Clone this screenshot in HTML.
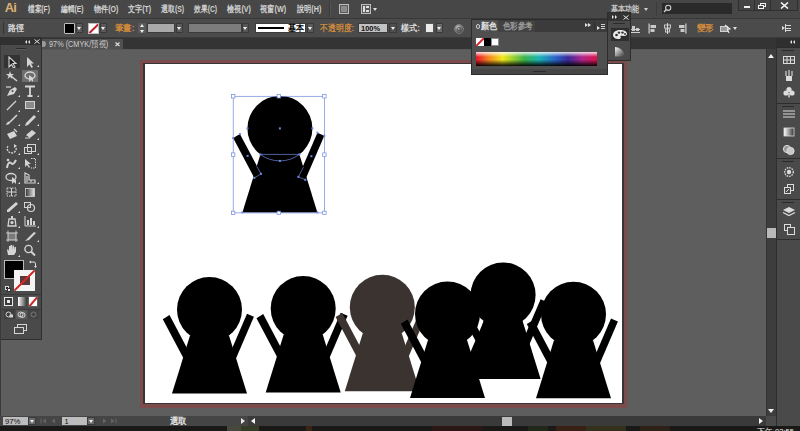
<!DOCTYPE html><html><head><meta charset="utf-8"><style>
*{margin:0;padding:0;box-sizing:border-box}
html,body{width:800px;height:431px;overflow:hidden;background:#4a4a4a;font-family:"Liberation Sans",sans-serif;}
.a{position:absolute}
.t{position:absolute;white-space:nowrap;font-size:10px;line-height:10px;color:#d6d6d6;font-weight:bold}
.dd{position:absolute;background:#6b6b6b;border:1px solid #3a3a3a}
.dd:after{content:"";position:absolute;left:50%;top:50%;margin-left:-2.5px;margin-top:-1px;border-left:2.5px solid transparent;border-right:2.5px solid transparent;border-top:3px solid #f0f0f0}
.or{color:#e0943a}
</style></head><body>
<div class="a" style="left:0px;top:0px;width:800px;height:18px;background:#474747;"></div>
<div class="a" style="left:0px;top:18px;width:800px;height:1px;background:#383838;"></div>
<div class="a" style="left:0px;top:19px;width:800px;height:18px;background:#4b4b4b;"></div>
<div class="a" style="left:0px;top:37px;width:800px;height:1px;background:#3a3a3a;"></div>
<div class="a" style="left:1px;top:38px;width:765px;height:378px;background:#5e5e5e;"></div>
<div class="a" style="left:41px;top:38px;width:735px;height:11px;background:#343434;"></div>
<div class="a" style="left:1px;top:49px;width:765px;height:1px;background:#585858;"></div>
<div class="a" style="left:0px;top:38.5px;width:123px;height:10.5px;background:#505050;"></div>
<div class="a" style="left:140px;top:60px;width:487px;height:348px;background:#7b4c4b;"></div>
<div class="a" style="left:143px;top:63px;width:481px;height:341px;background:#3a3436;"></div>
<div class="a" style="left:145px;top:64px;width:477px;height:339px;background:#ffffff;"></div>
<svg class="a" style="left:0;top:0" width="800" height="431" viewBox="0 0 800 431">
<defs>
<g id="fig">
<circle cx="0" cy="0" r="32.5"/>
<polygon points="-19.5,26 19.5,26 37.5,84 -37.5,84"/>
<polygon points="-46.7,9.7 -40,5.6 -18.9,45.4 -25.6,49.5"/>
<polygon points="44.4,7.3 37.5,4.3 18.5,48.4 25.4,51.4"/>
</g>
</defs>
<use href="#fig" x="209.5" y="309.5" fill="#000"/>
<use href="#fig" x="303.2" y="308.5" fill="#000"/>
<use href="#fig" x="382.3" y="307.3" fill="#3a3330"/>
<use href="#fig" x="447.5" y="314" fill="#000"/>
<use href="#fig" x="503.1" y="295" fill="#000"/>
<use href="#fig" x="573.5" y="314.3" fill="#000"/>
<use href="#fig" x="279.9" y="128.4" fill="#000"/>

<g fill="none" stroke="#7088dc" stroke-width="0.7"><rect x="233.2" y="96.3" width="91.2" height="116.6"/><path d="M260.4,154.4 L299.4,154.4"/><path d="M260.4,154.4 A32.5,32.5 0 0 0 299.4,154.4"/><path d="M256.7,166.3 L261.0,173.8 L254.3,177.9"/><path d="M303.5,167.0 L298.4,176.8 L305.3,179.8"/></g>
<g fill="#ffffff" stroke="#7088dc" stroke-width="0.7"><rect x="231.5" y="94.6" width="3.4" height="3.4"/><rect x="277.1" y="94.6" width="3.4" height="3.4"/><rect x="322.7" y="94.6" width="3.4" height="3.4"/><rect x="231.5" y="152.9" width="3.4" height="3.4"/><rect x="322.7" y="152.9" width="3.4" height="3.4"/><rect x="231.5" y="211.2" width="3.4" height="3.4"/><rect x="277.1" y="211.2" width="3.4" height="3.4"/><rect x="322.7" y="211.2" width="3.4" height="3.4"/></g>
<g fill="#7088dc"><rect x="278.9" y="127.4" width="2" height="2"/><rect x="246.4" y="127.4" width="2" height="2"/><rect x="311.4" y="127.4" width="2" height="2"/><rect x="278.9" y="159.9" width="2" height="2"/><rect x="259.4" y="153.4" width="2" height="2"/><rect x="298.4" y="153.4" width="2" height="2"/><rect x="232.2" y="137.1" width="2" height="2"/><rect x="238.9" y="133.0" width="2" height="2"/><rect x="260.0" y="172.8" width="2" height="2"/><rect x="253.3" y="176.9" width="2" height="2"/><rect x="323.3" y="134.7" width="2" height="2"/><rect x="316.4" y="131.7" width="2" height="2"/><rect x="297.4" y="175.8" width="2" height="2"/><rect x="304.3" y="178.8" width="2" height="2"/><rect x="246.6" y="154.9" width="2" height="2"/><rect x="310.4" y="155.2" width="2" height="2"/><rect x="241.4" y="211.4" width="2" height="2"/><rect x="316.4" y="211.4" width="2" height="2"/></g>
</svg>
<div class="t" style="left:4.8px;top:1.8px;font-size:12.8px;line-height:12.8px;font-weight:bold;color:#dcb273;letter-spacing:-0.8px">Ai</div>
<div class="t" id="t0" style="left:28.1px;top:4.5px;font-size:9px;line-height:9px;color:#d2d2d2;transform:scaleX(0.742);transform-origin:0 0;">檔案(F)</div>
<div class="t" id="t1" style="left:60.6px;top:4.5px;font-size:9px;line-height:9px;color:#d2d2d2;transform:scaleX(0.750);transform-origin:0 0;">編輯(E)</div>
<div class="t" id="t2" style="left:93.75px;top:4.5px;font-size:9px;line-height:9px;color:#d2d2d2;transform:scaleX(0.785);transform-origin:0 0;">物件(O)</div>
<div class="t" id="t3" style="left:128.1px;top:4.5px;font-size:9px;line-height:9px;color:#d2d2d2;transform:scaleX(0.785);transform-origin:0 0;">文字(T)</div>
<div class="t" id="t4" style="left:160.6px;top:4.5px;font-size:9px;line-height:9px;color:#d2d2d2;transform:scaleX(0.772);transform-origin:0 0;">選取(S)</div>
<div class="t" id="t5" style="left:193.75px;top:4.5px;font-size:9px;line-height:9px;color:#d2d2d2;transform:scaleX(0.759);transform-origin:0 0;">效果(C)</div>
<div class="t" id="t6" style="left:226.75px;top:4.5px;font-size:9px;line-height:9px;color:#d2d2d2;transform:scaleX(0.800);transform-origin:0 0;">檢視(V)</div>
<div class="t" id="t7" style="left:259.75px;top:4.5px;font-size:9px;line-height:9px;color:#d2d2d2;transform:scaleX(0.808);transform-origin:0 0;">視窗(W)</div>
<div class="t" id="t8" style="left:296.5px;top:4.5px;font-size:9px;line-height:9px;color:#d2d2d2;transform:scaleX(0.797);transform-origin:0 0;">說明(H)</div>
<div class="a" style="left:329px;top:2px;width:1px;height:15px;background:#3a3a3a;"></div>
<div class="a" style="left:330px;top:2px;width:1px;height:15px;background:#555555;"></div>
<div class="a" style="left:339px;top:4px;width:10px;height:10px;border:1px solid #bdbdbd;background:#5a5a5a"></div>
<div class="a" style="left:341px;top:6px;width:6px;height:6px;background:#8a8a8a"></div>
<div class="a" style="left:361px;top:4px;width:10px;height:10px;border:1px solid #bdbdbd;background:#5a5a5a"></div>
<div class="a" style="left:363px;top:6px;width:2px;height:6px;background:#e0e0e0"></div>
<div class="a" style="left:366px;top:6px;width:3px;height:2px;background:#e0e0e0"></div>
<div class="a" style="left:366px;top:10px;width:3px;height:2px;background:#e0e0e0"></div>
<div class="a" style="left:373px;top:8px;border-left:2.5px solid transparent;border-right:2.5px solid transparent;border-top:3px solid #e0e0e0"></div>
<div class="t" id="t9" style="left:610.6px;top:4.5px;font-size:9px;line-height:9px;color:#c8c8c8;transform:scaleX(0.778);transform-origin:0 0;">基本功能</div>
<div class="a" style="left:644px;top:8px;border-left:2.5px solid transparent;border-right:2.5px solid transparent;border-top:3px solid #d0d0d0"></div>
<div class="a" style="left:656px;top:2px;width:1px;height:14px;background:#3c3c3c;"></div>
<div class="a" style="left:662px;top:3px;width:70px;height:11px;background:#2a2a2a;"></div>
<svg class="a" style="left:663px;top:4px" width="9" height="9" viewBox="0 0 9 9"><circle cx="5.2" cy="3.8" r="2.6" fill="none" stroke="#cfcfcf" stroke-width="1.1"/><path d="M3.4,5.6 L1,8" stroke="#cfcfcf" stroke-width="1.4"/></svg>
<div class="a" style="left:738px;top:0px;width:60px;height:11px;background:#2f2f2f;"></div>
<div class="a" style="left:739px;top:0px;width:15px;height:10px;background:#444444;"></div>
<div class="a" style="left:755px;top:0px;width:15px;height:10px;background:#444444;"></div>
<div class="a" style="left:771px;top:0px;width:26px;height:10px;background:#444444;"></div>
<div class="a" style="left:744px;top:6px;width:6px;height:2px;background:#f0f0f0;"></div>
<div class="a" style="left:760px;top:3px;width:6px;height:4px;border:1px solid #f0f0f0"></div>
<div class="a" style="left:758px;top:5px;width:6px;height:4px;border:1px solid #f0f0f0;background:#444"></div>
<svg class="a" style="left:780px;top:2px" width="9" height="7" viewBox="0 0 9 7"><path d="M1,0.5 L8,6.5 M8,0.5 L1,6.5" stroke="#f4f4f4" stroke-width="1.6"/></svg>
<div class="a" style="left:3px;top:22px;width:1px;height:12px;background:#333333;"></div>
<div class="t" id="t10" style="left:8px;top:23.5px;font-size:9px;line-height:9px;color:#d8d8d8;transform:scaleX(0.889);transform-origin:0 0;">路徑</div>
<div class="a" style="left:64px;top:23px;width:11px;height:11px;border:1px solid #bdbdbd;border-radius:1px;background:#000"></div>
<div class="dd" style="left:76px;top:23px;width:7px;height:10px;background:#5a5a5a"></div>
<div class="a" style="left:88px;top:23px;width:11px;height:11px;border:1px solid #bdbdbd;background:#fff;overflow:hidden"><div style="position:absolute;left:-2px;top:3.5px;width:13px;height:2px;background:#c0202a;transform:rotate(-45deg)"></div></div>
<div class="dd" style="left:100px;top:23px;width:7px;height:10px;background:#5a5a5a"></div>
<div class="t" id="t11" style="left:115px;top:24px;font-size:9px;line-height:9px;color:#d08a3c;transform:scaleX(0.924);transform-origin:0 0;">筆畫:</div>
<div class="a" style="left:138px;top:23px;width:8px;height:10px;background:#5a5a5a"></div>
<div class="a" style="left:140px;top:24px;border-left:2.5px solid transparent;border-right:2.5px solid transparent;border-bottom:3px solid #eee"></div>
<div class="a" style="left:140px;top:30px;border-left:2.5px solid transparent;border-right:2.5px solid transparent;border-top:3px solid #eee"></div>
<div class="a" style="left:147px;top:23px;width:28px;height:10px;background:#a9a9a9;border:1px solid #3c3c3c"></div>
<div class="dd" style="left:176px;top:23px;width:7px;height:10px;background:#5a5a5a"></div>
<div class="a" style="left:188px;top:23px;width:54px;height:10px;background:#7c7c7c;border:1px solid #3c3c3c"></div>
<div class="dd" style="left:242px;top:23px;width:7px;height:10px;background:#555555"></div>
<div class="a" style="left:255px;top:23px;width:51px;height:10px;background:#ffffff;border:1px solid #3c3c3c"></div>
<div class="a" style="left:258px;top:27px;width:26px;height:2px;background:#000000;"></div>
<div class="t" id="t12" style="left:288px;top:23.5px;font-size:9px;line-height:9px;color:#000000;transform:scaleX(0.889);transform-origin:0 0;">基本</div>
<div class="dd" style="left:307px;top:23px;width:7px;height:10px;background:#5a5a5a"></div>
<div class="t" id="t13" style="left:320px;top:24px;font-size:9px;line-height:9px;color:#d08a3c;transform:scaleX(0.872);transform-origin:0 0;">不透明度:</div>
<div class="a" style="left:358px;top:23px;width:30px;height:10px;background:#c2c2c2;border:1px solid #3c3c3c"></div>
<div class="t" id="t14" style="left:360.5px;top:24.5px;font-size:8px;line-height:8px;color:#111111;transform:scaleX(0.928);transform-origin:0 0;">100%</div>
<div class="dd" style="left:389px;top:23px;width:8px;height:10px;background:#4e4e4e"></div>
<div class="t" id="t15" style="left:401px;top:23.5px;font-size:9px;line-height:9px;color:#d8d8d8;transform:scaleX(0.905);transform-origin:0 0;">樣式:</div>
<div class="a" style="left:425px;top:23px;width:9px;height:10px;background:#ebebeb;border:1px solid #555"></div>
<div class="dd" style="left:436px;top:23px;width:7px;height:10px;background:#6b6b6b"></div>
<svg class="a" style="left:454px;top:23.5px" width="10" height="10" viewBox="0 0 10 10"><defs><radialGradient id="gg" cx="0.4" cy="0.35" r="0.7"><stop offset="0" stop-color="#d8d8d8"/><stop offset="0.5" stop-color="#7a7a7a"/><stop offset="1" stop-color="#3a3a3a"/></radialGradient></defs><circle cx="5" cy="5" r="4.5" fill="url(#gg)" stroke="#9a9a9a" stroke-width="0.6"/><circle cx="5" cy="5.3" r="2.2" fill="#5a5a5a"/><circle cx="4.6" cy="4.8" r="0.9" fill="#bbb"/></svg>
<svg class="a" style="left:631px;top:23px" width="9" height="11" viewBox="0 0 9 11"><rect x="0" y="9" width="9" height="1" fill="#d0d0d0"/><rect x="1" y="3" width="3" height="5" fill="#c8c8c8"/><rect x="5" y="5" width="3" height="3" fill="#c8c8c8"/><rect x="0" y="6" width="9" height="1" fill="#d0d0d0"/></svg>
<svg class="a" style="left:647.5px;top:23px" width="9" height="11" viewBox="0 0 9 11"><rect x="0.5" y="0.5" width="1.2" height="10" fill="#d0d0d0"/><rect x="2.5" y="2" width="5.5" height="3" fill="#c8c8c8"/><rect x="2.5" y="6" width="4" height="3" fill="#c8c8c8"/></svg>
<svg class="a" style="left:662.5px;top:23px" width="9" height="11" viewBox="0 0 9 11"><rect x="1.5" y="2" width="6" height="3" fill="none" stroke="#c8c8c8" stroke-width="1"/><rect x="2.5" y="6" width="4" height="3" fill="none" stroke="#c8c8c8" stroke-width="1"/><rect x="4" y="0" width="1" height="11" fill="#d8d8d8"/></svg>
<svg class="a" style="left:678px;top:23px" width="9" height="11" viewBox="0 0 9 11"><rect x="7.3" y="0.5" width="1.2" height="10" fill="#d0d0d0"/><rect x="1" y="2" width="5.5" height="3" fill="#c8c8c8"/><rect x="2.5" y="6" width="4" height="3" fill="#c8c8c8"/></svg>
<div class="t" id="t16" style="left:697px;top:24px;font-size:9px;line-height:9px;color:#d08a3c;transform:scaleX(0.944);transform-origin:0 0;">變形</div>
<svg class="a" style="left:719.5px;top:23.5px" width="11" height="10" viewBox="0 0 11 10"><rect x="0.5" y="2.5" width="7" height="5" fill="#9a9a9a" stroke="#d0d0d0" stroke-width="1"/><path d="M5,1 L10,5 L7.5,5.5 L9,9" stroke="#e8e8e8" stroke-width="1.1" fill="none"/></svg>
<div class="a" style="left:733px;top:27px;border-left:2.5px solid transparent;border-right:2.5px solid transparent;border-top:3px solid #e0e0e0"></div>
<div class="a" style="left:782px;top:26px;border-top:2px solid transparent;border-bottom:2px solid transparent;border-left:3px solid #e0e0e0"></div>
<div class="a" style="left:786px;top:25.0px;width:5px;height:1px;background:#d8d8d8;"></div>
<div class="a" style="left:786px;top:27.5px;width:5px;height:1px;background:#d8d8d8;"></div>
<div class="a" style="left:786px;top:30.0px;width:5px;height:1px;background:#d8d8d8;"></div>
<div class="a" style="left:785px;top:24px;width:1px;height:8px;background:#d8d8d8;"></div>
<div class="t" id="t17" style="left:48.7px;top:39.5px;font-size:9px;line-height:9px;color:#cccccc;transform:scaleX(0.812);transform-origin:0 0;font-weight:normal;">97% (CMYK/預視)</div>
<svg class="a" style="left:114.5px;top:42px" width="5" height="4.5" viewBox="0 0 5 4.5"><path d="M0.5,0.5 L4.5,4 M4.5,0.5 L0.5,4" stroke="#e0e0e0" stroke-width="1.1"/></svg>
<svg class="a" style="left:41px;top:40px" width="6" height="8" viewBox="0 0 6 8"><circle cx="2" cy="4" r="3" fill="#9a9a9a"/></svg>
<div class="a" style="left:471px;top:19px;width:137px;height:56px;background:#2c2c2c;"></div>
<div class="a" style="left:472px;top:20px;width:135px;height:54px;background:#4f4f4f;"></div>
<div class="a" style="left:472px;top:20px;width:135px;height:12px;background:#3b3b3b;"></div>
<div class="a" style="left:472px;top:20px;width:26px;height:12px;background:#4f4f4f;"></div>
<div class="a" style="left:498px;top:21px;width:37px;height:11px;background:#424242;"></div>
<div class="a" style="left:476px;top:24px;width:4px;height:5px;border:1px solid #cfcfcf;border-radius:2px"></div>
<div class="t" id="t18" style="left:481px;top:22px;font-size:9px;line-height:9px;color:#e0e0e0;transform:scaleX(0.889);transform-origin:0 0;">顏色</div>
<div class="t" id="t19" style="left:503px;top:22px;font-size:9px;line-height:9px;color:#9a9a9a;transform:scaleX(0.833);transform-origin:0 0;">色彩參考</div>
<div class="a" style="left:585px;top:23px;border-top:2.5px solid transparent;border-bottom:2.5px solid transparent;border-left:3px solid #e0e0e0"></div>
<div class="a" style="left:588px;top:23px;border-top:2.5px solid transparent;border-bottom:2.5px solid transparent;border-left:3px solid #e0e0e0"></div>
<div class="a" style="left:594px;top:22px;width:1px;height:8px;background:#2e2e2e;"></div>
<div class="a" style="left:597px;top:26px;border-top:2px solid transparent;border-bottom:2px solid transparent;border-left:3px solid #e0e0e0"></div>
<div class="a" style="left:601px;top:24px;width:4px;height:1px;background:#cfcfcf;"></div>
<div class="a" style="left:601px;top:26px;width:4px;height:1px;background:#cfcfcf;"></div>
<div class="a" style="left:601px;top:28px;width:4px;height:1px;background:#cfcfcf;"></div>
<div class="a" style="left:476px;top:38px;width:8px;height:8px;background:#fff;overflow:hidden"><div style="position:absolute;left:-2px;top:3px;width:12px;height:1.5px;background:#d2262b;transform:rotate(-45deg)"></div></div>
<div class="a" style="left:484px;top:38px;width:7px;height:8px;background:#000000;"></div>
<div class="a" style="left:491px;top:38px;width:8px;height:8px;background:#ffffff;border:1px solid #888"></div>
<div class="a" style="left:476px;top:52px;width:121px;height:14px;background:linear-gradient(to bottom,rgba(255,255,255,0.85) 0%,rgba(255,255,255,0) 35%,rgba(0,0,0,0) 55%,rgba(0,0,0,0.95) 100%),linear-gradient(to right,#e8102a 0%,#f58220 10%,#f4e81a 22%,#3cb44a 40%,#1ab4b4 52%,#2a62c8 66%,#3a2a9a 76%,#b0268a 88%,#e0104a 100%)"></div>
<div class="a" style="left:472px;top:69px;width:135px;height:5px;background:#454545;"></div>
<div class="a" style="left:533px;top:71px;width:13px;height:1px;background:#2a2a2a;"></div>
<div class="a" style="left:607px;top:12px;width:24px;height:49px;background:#2c2c2c;"></div>
<div class="a" style="left:608px;top:13px;width:22px;height:47px;background:#4a4a4a;"></div>
<div class="a" style="left:608px;top:13px;width:22px;height:8px;background:#333333;"></div>
<div class="a" style="left:612px;top:15px;border-top:2px solid transparent;border-bottom:2px solid transparent;border-left:2.5px solid #e8e8e8"></div>
<div class="a" style="left:615px;top:15px;border-top:2px solid transparent;border-bottom:2px solid transparent;border-left:2.5px solid #e8e8e8"></div>
<svg class="a" style="left:623px;top:14.5px" width="6" height="5" viewBox="0 0 6 5"><path d="M0.5,0.5 L5.5,4.5 M5.5,0.5 L0.5,4.5" stroke="#e8e8e8" stroke-width="1"/></svg>
<div class="a" style="left:613px;top:23px;width:12px;height:1px;background:#2a2a2a;"></div>
<div class="a" style="left:611px;top:28px;width:18px;height:13px;background:#2e2e2e;"></div>
<svg class="a" style="left:612px;top:29px" width="16" height="11" viewBox="0 0 16 11"><path d="M8,1 C3.5,1 1,3.5 1,6 C1,8.5 3.5,10 7,10 C9,10 9,8.5 8.5,7.8 C8,7 9,6.3 10.5,6.8 C13.5,7.5 15,6.5 15,4.8 C15,2.5 12,1 8,1 Z" fill="#e8e8e8"/><circle cx="4.5" cy="6" r="1.3" fill="#2e2e2e"/><circle cx="7" cy="3.6" r="1.2" fill="#2e2e2e"/><circle cx="10.5" cy="3.6" r="1.2" fill="#2e2e2e"/><circle cx="13" cy="5" r="0.9" fill="#2e2e2e"/></svg>
<svg class="a" style="left:614px;top:46px" width="11" height="11" viewBox="0 0 11 11"><defs><linearGradient id="gq" x1="0" y1="0" x2="1" y2="1"><stop offset="0" stop-color="#fafafa"/><stop offset="1" stop-color="#3a3a3a"/></linearGradient></defs><path d="M1,1 A9.5,9.5 0 0 1 10.5,10.5 L1,10.5 Z" fill="url(#gq)"/></svg>
<div class="a" style="left:0px;top:37px;width:42px;height:303px;background:#2f2f2f;"></div>
<div class="a" style="left:0px;top:45px;width:41px;height:294px;background:#4a4a4a;"></div>
<div class="a" style="left:0px;top:38px;width:1px;height:378px;background:#3a3a3a;"></div>
<div class="a" style="left:0px;top:37px;width:41px;height:8px;background:#303030;"></div>
<div class="a" style="left:25px;top:39.5px;border-top:2px solid transparent;border-bottom:2px solid transparent;border-right:2.5px solid #e0e0e0"></div>
<div class="a" style="left:27.5px;top:39.5px;border-top:2px solid transparent;border-bottom:2px solid transparent;border-right:2.5px solid #e0e0e0"></div>
<svg class="a" style="left:34px;top:39px" width="6" height="5" viewBox="0 0 6 5"><path d="M0.5,0.5 L5.5,4.5 M5.5,0.5 L0.5,4.5" stroke="#e0e0e0" stroke-width="1"/></svg>
<div class="a" style="left:16px;top:48px;width:10px;height:1px;background:#2a2a2a;"></div>
<div class="a" style="left:16px;top:49px;width:10px;height:1px;background:#5a5a5a;"></div>
<div class="a" style="left:4px;top:55px;width:16px;height:13px;background:#333333;"></div>
<div class="a" style="left:22px;top:70px;width:16px;height:12px;background:#6e6e6e;"></div>
<svg class="a" style="left:5.0px;top:55.5px" width="14" height="12" viewBox="0 0 14 12"><path d="M4,1 L4,11 L6.5,8.5 L8.5,12 L10,11 L8,7.5 L11,7.5 Z" fill="#1e1e1e" stroke="#d4d4d4" stroke-width="1.1"/></svg>
<svg class="a" style="left:23.0px;top:55.5px" width="14" height="12" viewBox="0 0 14 12"><path d="M4,1 L4,11 L6.5,8.5 L8.5,12 L10,11 L8,7.5 L11,7.5 Z" fill="#d4d4d4"/></svg>
<div class="a" style="left:37px;top:65px;border-left:2px solid transparent;border-bottom:2px solid #e0e0e0"></div>
<svg class="a" style="left:5.0px;top:70.0px" width="14" height="12" viewBox="0 0 14 12"><path d="M6,6 L12,11" stroke="#d4d4d4" stroke-width="1.6"/><path d="M5,1 L6,4 L9,4 L6.5,6 L7.5,9 L5,7 L2.5,9 L3.5,6 L1,4 L4,4 Z" fill="#d4d4d4"/></svg>
<svg class="a" style="left:23.0px;top:70.0px" width="14" height="12" viewBox="0 0 14 12"><ellipse cx="7" cy="5.5" rx="5" ry="3.5" fill="none" stroke="#d4d4d4" stroke-width="1.4"/><path d="M6,5 L6,12 L8,10 L10,12 L10,8 Z" fill="#d4d4d4"/></svg>
<svg class="a" style="left:5.0px;top:84.5px" width="14" height="12" viewBox="0 0 14 12"><path d="M2,11 L5,5 L10,2 L12,4 L9,9 Z" fill="#d4d4d4"/><path d="M1,2 L6,2" stroke="#d4d4d4" stroke-width="1.2"/><circle cx="7.5" cy="6" r="1" fill="#4a4a4a"/></svg>
<div class="a" style="left:18px;top:95px;border-left:2px solid transparent;border-bottom:2px solid #e0e0e0"></div>
<svg class="a" style="left:23.0px;top:84.5px" width="14" height="12" viewBox="0 0 14 12"><path d="M2,1.5 L12,1.5 M7,1.5 L7,11 M4.5,11 L9.5,11" stroke="#d4d4d4" stroke-width="1.8"/></svg>
<div class="a" style="left:37px;top:95px;border-left:2px solid transparent;border-bottom:2px solid #e0e0e0"></div>
<svg class="a" style="left:5.0px;top:99.0px" width="14" height="12" viewBox="0 0 14 12"><path d="M2,11 L11,2" stroke="#d4d4d4" stroke-width="1.3"/></svg>
<div class="a" style="left:18px;top:110px;border-left:2px solid transparent;border-bottom:2px solid #e0e0e0"></div>
<svg class="a" style="left:23.0px;top:99.0px" width="14" height="12" viewBox="0 0 14 12"><rect x="2.5" y="2.5" width="9" height="7" fill="#8a8a8a" stroke="#d4d4d4" stroke-width="1"/></svg>
<div class="a" style="left:37px;top:110px;border-left:2px solid transparent;border-bottom:2px solid #e0e0e0"></div>
<svg class="a" style="left:5.0px;top:113.5px" width="14" height="12" viewBox="0 0 14 12"><path d="M12,1 L5,8" stroke="#d4d4d4" stroke-width="1.6"/><path d="M1,11 Q2,7 5,7.5 Q6,10 1,11 Z" fill="#d4d4d4"/></svg>
<div class="a" style="left:18px;top:124px;border-left:2px solid transparent;border-bottom:2px solid #e0e0e0"></div>
<svg class="a" style="left:23.0px;top:113.5px" width="14" height="12" viewBox="0 0 14 12"><path d="M11,1 L13,3 L5,11 L2,12 L3,9 Z" fill="#d4d4d4"/></svg>
<div class="a" style="left:37px;top:124px;border-left:2px solid transparent;border-bottom:2px solid #e0e0e0"></div>
<svg class="a" style="left:5.0px;top:128.0px" width="14" height="12" viewBox="0 0 14 12"><path d="M2,6 L9,3 L12,8 L5,11 Z" fill="#d4d4d4"/><path d="M9,1 L12,4" stroke="#d4d4d4" stroke-width="1.3"/></svg>
<svg class="a" style="left:23.0px;top:128.0px" width="14" height="12" viewBox="0 0 14 12"><path d="M3,7 L9,2 L13,5 L7,10 Z" fill="#d4d4d4"/><path d="M2,10 L7,10" stroke="#d4d4d4" stroke-width="1"/></svg>
<div class="a" style="left:37px;top:138px;border-left:2px solid transparent;border-bottom:2px solid #e0e0e0"></div>
<svg class="a" style="left:5.0px;top:142.5px" width="14" height="12" viewBox="0 0 14 12"><path d="M3,3 A4.5,4.5 0 1 0 11,4" fill="none" stroke="#d4d4d4" stroke-width="1.3" stroke-dasharray="2,1"/><path d="M9,1 L12,3 L9,5 Z" fill="#d4d4d4"/></svg>
<div class="a" style="left:18px;top:153px;border-left:2px solid transparent;border-bottom:2px solid #e0e0e0"></div>
<svg class="a" style="left:23.0px;top:142.5px" width="14" height="12" viewBox="0 0 14 12"><rect x="1.5" y="4.5" width="7" height="6" fill="none" stroke="#d4d4d4" stroke-width="1"/><rect x="4.5" y="1.5" width="8" height="7" fill="none" stroke="#d4d4d4" stroke-width="1"/></svg>
<div class="a" style="left:37px;top:153px;border-left:2px solid transparent;border-bottom:2px solid #e0e0e0"></div>
<svg class="a" style="left:5.0px;top:157.0px" width="14" height="12" viewBox="0 0 14 12"><path d="M2,11 Q3,4 6,6 Q8,9 11,3" fill="none" stroke="#d4d4d4" stroke-width="2"/><circle cx="3" cy="3" r="1.3" fill="#d4d4d4"/></svg>
<div class="a" style="left:18px;top:167px;border-left:2px solid transparent;border-bottom:2px solid #e0e0e0"></div>
<svg class="a" style="left:23.0px;top:157.0px" width="14" height="12" viewBox="0 0 14 12"><path d="M2,2 L2,10 L4,8 L6,11 L7,10 L5,7 L8,7 Z" fill="#d4d4d4"/><path d="M8,1.5 L12.5,1.5 L12.5,11 L8,11" fill="none" stroke="#d4d4d4" stroke-width="1" stroke-dasharray="1.5,1"/></svg>
<svg class="a" style="left:5.0px;top:171.5px" width="14" height="12" viewBox="0 0 14 12"><ellipse cx="6" cy="5" rx="5" ry="3.5" fill="none" stroke="#d4d4d4" stroke-width="1.3"/><path d="M7,5 L7,12 L9,10 L11,12 L11,8 Z" fill="#d4d4d4"/></svg>
<div class="a" style="left:18px;top:182px;border-left:2px solid transparent;border-bottom:2px solid #e0e0e0"></div>
<svg class="a" style="left:23.0px;top:171.5px" width="14" height="12" viewBox="0 0 14 12"><path d="M2,1 L2,11 L12,11 L12,8 L6,8 L6,3 Z" fill="none" stroke="#d4d4d4" stroke-width="1.2"/><path d="M4,4 L4,10 M8,8 L8,10" stroke="#d4d4d4" stroke-width="1.2"/></svg>
<div class="a" style="left:37px;top:182px;border-left:2px solid transparent;border-bottom:2px solid #e0e0e0"></div>
<svg class="a" style="left:5.0px;top:186.0px" width="14" height="12" viewBox="0 0 14 12"><rect x="2" y="2" width="9" height="8" fill="none" stroke="#d4d4d4" stroke-width="1" stroke-dasharray="1.5,1"/><path d="M2,6 L11,6 M6.5,2 L6.5,10" stroke="#d4d4d4" stroke-width="1"/></svg>
<svg class="a" style="left:23.0px;top:186.0px" width="14" height="12" viewBox="0 0 14 12"><defs><linearGradient id="gt" x1="0" x2="1"><stop offset="0" stop-color="#333"/><stop offset="1" stop-color="#e8e8e8"/></linearGradient></defs><rect x="2.5" y="2.5" width="9" height="8" fill="url(#gt)" stroke="#d4d4d4" stroke-width="0.8"/></svg>
<svg class="a" style="left:5.0px;top:200.5px" width="14" height="12" viewBox="0 0 14 12"><path d="M11,1 L13,3 L4,11 L2,11 L2,9 Z" fill="#d4d4d4"/></svg>
<div class="a" style="left:18px;top:211px;border-left:2px solid transparent;border-bottom:2px solid #e0e0e0"></div>
<svg class="a" style="left:23.0px;top:200.5px" width="14" height="12" viewBox="0 0 14 12"><rect x="1.5" y="1.5" width="6" height="5" fill="none" stroke="#d4d4d4" stroke-width="1"/><circle cx="8" cy="7" r="3.5" fill="none" stroke="#d4d4d4" stroke-width="1.2"/></svg>
<svg class="a" style="left:5.0px;top:215.0px" width="14" height="12" viewBox="0 0 14 12"><path d="M4,4 L10,4 L11,11 L3,11 Z" fill="none" stroke="#d4d4d4" stroke-width="1.3"/><circle cx="7" cy="7.5" r="1.6" fill="#d4d4d4"/><path d="M6,1 L8,1 L8,4 L6,4 Z" fill="#d4d4d4"/></svg>
<div class="a" style="left:18px;top:226px;border-left:2px solid transparent;border-bottom:2px solid #e0e0e0"></div>
<svg class="a" style="left:23.0px;top:215.0px" width="14" height="12" viewBox="0 0 14 12"><path d="M2,1 L2,11 L13,11" fill="none" stroke="#d4d4d4" stroke-width="1"/><rect x="4" y="5" width="2" height="5" fill="#d4d4d4"/><rect x="7" y="3" width="2" height="7" fill="#d4d4d4"/><rect x="10" y="6" width="2" height="4" fill="#d4d4d4"/></svg>
<div class="a" style="left:37px;top:226px;border-left:2px solid transparent;border-bottom:2px solid #e0e0e0"></div>
<svg class="a" style="left:5.0px;top:229.5px" width="14" height="12" viewBox="0 0 14 12"><rect x="3" y="3" width="8" height="7" fill="#7a7a7a" stroke="#d4d4d4" stroke-width="1"/><path d="M1,3 L3,3 M11,3 L13,3 M1,10 L3,10 M11,10 L13,10 M3,0.5 L3,3 M11,0.5 L11,3 M3,10 L3,12 M11,10 L11,12" stroke="#d4d4d4" stroke-width="0.8"/></svg>
<svg class="a" style="left:23.0px;top:229.5px" width="14" height="12" viewBox="0 0 14 12"><path d="M2,11 L11,2 L13,3 L6,10 Z" fill="#d4d4d4"/></svg>
<div class="a" style="left:37px;top:240px;border-left:2px solid transparent;border-bottom:2px solid #e0e0e0"></div>
<svg class="a" style="left:5.0px;top:244.0px" width="14" height="12" viewBox="0 0 14 12"><path d="M3,11 L2,6 L3,5 L4,7 L4,2 L5.5,2 L5.5,6 L5.5,1 L7,1 L7,6 L7.5,1.5 L9,1.5 L9,6 L9.5,3 L11,3 L11,8 L9,11 Z" fill="#d4d4d4"/></svg>
<div class="a" style="left:18px;top:255px;border-left:2px solid transparent;border-bottom:2px solid #e0e0e0"></div>
<svg class="a" style="left:23.0px;top:244.0px" width="14" height="12" viewBox="0 0 14 12"><circle cx="5.5" cy="5" r="3.6" fill="none" stroke="#d4d4d4" stroke-width="1.4"/><path d="M8,7.5 L12,11.5" stroke="#d4d4d4" stroke-width="2"/></svg>
<div class="a" style="left:14px;top:270px;width:21px;height:21px;background:#f4f4f4;"></div>
<div class="a" style="left:19.5px;top:275.5px;width:10px;height:9px;background:#5e3838;"></div>
<svg class="a" style="left:14px;top:270px" width="21" height="21" viewBox="0 0 21 21"><path d="M0.5,20.5 L20.5,0.5" stroke="#d42a2a" stroke-width="1.6"/></svg>
<div class="a" style="left:4px;top:260px;width:20px;height:19px;background:#b8b8b8;"></div>
<div class="a" style="left:5px;top:261px;width:18px;height:17px;background:#000000;"></div>
<div class="a" style="left:14px;top:270px;width:10px;height:9px;background:#f4f4f4;"></div>
<div class="a" style="left:19.5px;top:275.5px;width:4.5px;height:3.5px;background:#5e3838;"></div>
<svg class="a" style="left:14px;top:270px" width="21" height="21" viewBox="0 0 21 21"><path d="M0.5,20.5 L20.5,0.5" stroke="#d42a2a" stroke-width="1.6"/></svg>
<svg class="a" style="left:29px;top:260px" width="8" height="8" viewBox="0 0 8 8"><path d="M1,2 L5,2 Q6.5,2 6.5,4 L6.5,6.5" fill="none" stroke="#e0e0e0" stroke-width="1"/><path d="M0,2 L2,0.5 L2,3.5 Z M6.5,8 L5,6 L8,6 Z" fill="#e0e0e0"/></svg>
<div class="a" style="left:5px;top:286px;width:4px;height:4px;background:#1a1a1a;border:1px solid #ddd"></div>
<div class="a" style="left:7px;top:288px;width:4px;height:4px;background:#eeeeee;border:1px solid #333"></div>
<div class="a" style="left:0px;top:294px;width:41px;height:1px;background:#3a3a3a;"></div>
<div class="a" style="left:4px;top:297px;width:9px;height:9px;background:#3a3a3a;border:1px solid #e8e8e8"></div>
<div class="a" style="left:7px;top:300px;width:3px;height:3px;background:#e8e8e8;"></div>
<div class="a" style="left:18px;top:297px;width:9px;height:9px;background:linear-gradient(to right,#fff,#333)"></div>
<div class="a" style="left:28px;top:296px;width:10px;height:11px;background:#5e5e5e;"></div>
<div class="a" style="left:29px;top:297px;width:8px;height:9px;background:#fff;overflow:hidden"><div style="position:absolute;left:-2px;top:3.5px;width:12px;height:1.6px;background:#d2262b;transform:rotate(-50deg)"></div></div>
<div class="a" style="left:0px;top:309px;width:41px;height:1px;background:#3a3a3a;"></div>
<div class="a" style="left:4px;top:310px;width:11px;height:9px;background:#3e3e3e;"></div>
<div class="a" style="left:16px;top:310px;width:11px;height:9px;background:#5a5a5a;"></div>
<div class="a" style="left:28px;top:310px;width:11px;height:9px;background:#444444;"></div>
<svg class="a" style="left:5px;top:311px" width="9" height="7" viewBox="0 0 9 7"><circle cx="3.5" cy="3.5" r="2.5" fill="none" stroke="#d4d4d4" stroke-width="1"/><rect x="4.5" y="3.5" width="3.5" height="3" fill="#d4d4d4"/></svg>
<svg class="a" style="left:17px;top:311px" width="9" height="7" viewBox="0 0 9 7"><circle cx="3.5" cy="3.5" r="2.5" fill="none" stroke="#d4d4d4" stroke-width="1"/><circle cx="5.5" cy="4" r="2.5" fill="none" stroke="#d4d4d4" stroke-width="1"/></svg>
<svg class="a" style="left:29px;top:311px" width="9" height="7" viewBox="0 0 9 7"><circle cx="4.5" cy="3.5" r="2.5" fill="none" stroke="#7a7a7a" stroke-width="1"/></svg>
<svg class="a" style="left:13px;top:324px" width="15" height="11" viewBox="0 0 15 11"><rect x="4.5" y="0.5" width="9" height="6" fill="#4a4a4a" stroke="#d4d4d4" stroke-width="1"/><rect x="1.5" y="3.5" width="9" height="6" fill="#4a4a4a" stroke="#d4d4d4" stroke-width="1"/></svg>
<div class="a" style="left:766px;top:49px;width:10px;height:367px;background:#3d3d3d;"></div>
<div class="a" style="left:768px;top:54px;border-left:3px solid transparent;border-right:3px solid transparent;border-bottom:4px solid #f0f0f0"></div>
<div class="a" style="left:767px;top:228px;width:9px;height:10px;background:#b9b9b9;"></div>
<div class="a" style="left:768px;top:409px;border-left:3px solid transparent;border-right:3px solid transparent;border-top:4px solid #f0f0f0"></div>
<div class="a" style="left:776px;top:38px;width:24px;height:388px;background:#2f2f2f;"></div>
<div class="a" style="left:777px;top:47px;width:23px;height:379px;background:#4a4a4a;"></div>
<div class="a" style="left:790px;top:40px;border-top:2px solid transparent;border-bottom:2px solid transparent;border-right:2.5px solid #e0e0e0"></div>
<div class="a" style="left:793px;top:40px;border-top:2px solid transparent;border-bottom:2px solid transparent;border-right:2.5px solid #e0e0e0"></div>
<div class="a" style="left:777px;top:239px;width:23px;height:1px;background:#2e2e2e;"></div>
<div class="a" style="left:766px;top:49px;width:1px;height:367px;background:#333333;"></div>
<div class="a" style="left:777px;top:47px;width:23px;height:1px;background:#2c2c2c;"></div>
<div class="a" style="left:782px;top:49.5px;width:12px;height:1.2px;background:#2a2a2a;"></div>
<div class="a" style="left:777px;top:103px;width:23px;height:1px;background:#2c2c2c;"></div>
<div class="a" style="left:782px;top:105.5px;width:12px;height:1.2px;background:#2a2a2a;"></div>
<div class="a" style="left:777px;top:158px;width:23px;height:1px;background:#2c2c2c;"></div>
<div class="a" style="left:782px;top:160.5px;width:12px;height:1.2px;background:#2a2a2a;"></div>
<div class="a" style="left:777px;top:199px;width:23px;height:1px;background:#2c2c2c;"></div>
<div class="a" style="left:782px;top:201.5px;width:12px;height:1.2px;background:#2a2a2a;"></div>
<svg class="a" style="left:782px;top:54px" width="14" height="12" viewBox="0 0 14 12"><rect x="1.5" y="2.5" width="11" height="7" fill="none" stroke="#dcdcdc" stroke-width="1"/><path d="M1.5,6 L12.5,6 M5,2.5 L5,9.5 M8.5,2.5 L8.5,9.5" stroke="#dcdcdc" stroke-width="1"/></svg>
<svg class="a" style="left:782px;top:70px" width="14" height="12" viewBox="0 0 14 12"><path d="M4,1 L4,6 M7,0 L7,6 M10,1 L10,6" stroke="#dcdcdc" stroke-width="1.1"/><rect x="4" y="6" width="6" height="5" fill="#dcdcdc"/></svg>
<svg class="a" style="left:782px;top:86px" width="14" height="12" viewBox="0 0 14 12"><circle cx="7" cy="3.5" r="2.6" fill="#dcdcdc"/><circle cx="4" cy="7" r="2.6" fill="#dcdcdc"/><circle cx="10" cy="7" r="2.6" fill="#dcdcdc"/><rect x="6.3" y="7" width="1.4" height="4.5" fill="#dcdcdc"/></svg>
<svg class="a" style="left:782px;top:108px" width="14" height="12" viewBox="0 0 14 12"><path d="M1,3 L13,3 M1,6 L13,6 M1,9 L13,9" stroke="#dcdcdc" stroke-width="1.2"/></svg>
<svg class="a" style="left:782px;top:126px" width="14" height="12" viewBox="0 0 14 12"><defs><linearGradient id="gd" x1="0" x2="1"><stop offset="0" stop-color="#fff"/><stop offset="1" stop-color="#333"/></linearGradient></defs><rect x="2" y="2" width="10" height="8" fill="url(#gd)" stroke="#dcdcdc" stroke-width="0.8"/></svg>
<svg class="a" style="left:782px;top:144px" width="14" height="12" viewBox="0 0 14 12"><circle cx="5" cy="5" r="3.6" fill="#9a9a9a" stroke="#dcdcdc" stroke-width="1"/><circle cx="8.5" cy="7" r="3.6" fill="#c8c8c8" stroke="#dcdcdc" stroke-width="1"/></svg>
<svg class="a" style="left:782px;top:166px" width="14" height="12" viewBox="0 0 14 12"><circle cx="7" cy="6" r="4.3" fill="none" stroke="#dcdcdc" stroke-width="1.3" stroke-dasharray="1.5,1"/><circle cx="7" cy="6" r="2.2" fill="#dcdcdc"/></svg>
<svg class="a" style="left:782px;top:183px" width="14" height="12" viewBox="0 0 14 12"><rect x="5.5" y="1.5" width="6" height="6" fill="none" stroke="#dcdcdc" stroke-width="1"/><rect x="2.5" y="4.5" width="6" height="6" fill="#4a4a4a" stroke="#dcdcdc" stroke-width="1"/><path d="M4,9 L7,6" stroke="#dcdcdc" stroke-width="1"/></svg>
<svg class="a" style="left:782px;top:206px" width="14" height="12" viewBox="0 0 14 12"><path d="M7,1 L13,4 L7,7 L1,4 Z" fill="#dcdcdc"/><path d="M1,6.5 L7,9.5 L13,6.5" fill="none" stroke="#dcdcdc" stroke-width="1.2"/></svg>
<svg class="a" style="left:782px;top:223px" width="14" height="12" viewBox="0 0 14 12"><rect x="2.5" y="1.5" width="6" height="6" fill="none" stroke="#dcdcdc" stroke-width="1"/><rect x="5.5" y="4.5" width="7" height="7" fill="#4a4a4a" stroke="#dcdcdc" stroke-width="1"/></svg>
<div class="a" style="left:0px;top:416px;width:776px;height:10px;background:#454545;"></div>
<div class="a" style="left:248px;top:416px;width:518px;height:10px;background:#3a3a3a;"></div>
<div class="a" style="left:3px;top:417px;width:25px;height:8px;background:#bdbdbd;"></div>
<div class="t" id="t20" style="left:5px;top:418px;font-size:7.5px;line-height:7.5px;color:#111111;transform:scaleX(1.032);transform-origin:0 0;font-weight:normal;">97%</div>
<div class="dd" style="left:28px;top:417px;width:8px;height:8px;background:#6b6b6b"></div>
<svg class="a" style="left:40px;top:418px" width="18" height="6" viewBox="0 0 18 6"><path d="M1,0.5 L1,5.5" stroke="#646464" stroke-width="1"/><path d="M6,0.5 L2.5,3 L6,5.5 Z M15,0.5 L11.5,3 L15,5.5 Z" fill="#646464"/></svg>
<div class="a" style="left:62px;top:417px;width:25px;height:8px;background:#bdbdbd;"></div>
<div class="t" id="t21" style="left:64.5px;top:418px;font-size:7.5px;line-height:7.5px;color:#111111;font-weight:normal;">1</div>
<div class="dd" style="left:87px;top:417px;width:8px;height:8px;background:#6b6b6b"></div>
<svg class="a" style="left:100px;top:418px" width="18" height="6" viewBox="0 0 18 6"><path d="M16,0.5 L16,5.5" stroke="#646464" stroke-width="1"/><path d="M3,0.5 L6.5,3 L3,5.5 Z M11,0.5 L14.5,3 L11,5.5 Z" fill="#646464"/></svg>
<div class="t" id="t22" style="left:170px;top:416.5px;font-size:9px;line-height:9px;color:#e4e4e4;transform:scaleX(0.944);transform-origin:0 0;">選取</div>
<div class="a" style="left:241px;top:418px;border-top:3px solid transparent;border-bottom:3px solid transparent;border-left:4px solid #e8e8e8"></div>
<div class="a" style="left:251px;top:418px;border-top:3px solid transparent;border-bottom:3px solid transparent;border-right:4px solid #f4f4f4"></div>
<div class="a" style="left:502px;top:417px;width:10px;height:9px;background:#bcbcbc;"></div>
<div class="a" style="left:759px;top:418px;border-top:3px solid transparent;border-bottom:3px solid transparent;border-left:4px solid #f0f0f0"></div>
<div class="a" style="left:766px;top:416px;width:10px;height:10px;background:#4a4a4a;"></div>
<div class="a" style="left:0px;top:425.5px;width:800px;height:6px;background:#1a1918;"></div>
<div class="a" style="left:227px;top:426px;width:14px;height:5px;background:#48483f;"></div>
<div class="a" style="left:241px;top:426px;width:18px;height:5px;background:#343c26;"></div>
<div class="a" style="left:306px;top:426px;width:6px;height:5px;background:#3a2418;"></div>
<div class="a" style="left:432px;top:426px;width:50px;height:5px;background:#2c1616;"></div>
<div class="a" style="left:528px;top:426px;width:20px;height:5px;background:#22281a;"></div>
<div class="a" style="left:556px;top:426px;width:30px;height:5px;background:#3a2014;"></div>
<div class="a" style="left:586px;top:426px;width:40px;height:5px;background:#33301c;"></div>
<div class="a" style="left:640px;top:426px;width:30px;height:5px;background:#2e2218;"></div>
<div class="t" id="t23" style="left:757px;top:427.5px;font-size:7.5px;line-height:7.5px;color:#e8e8e8;font-weight:normal;">下午 03:55</div>
</body></html>
